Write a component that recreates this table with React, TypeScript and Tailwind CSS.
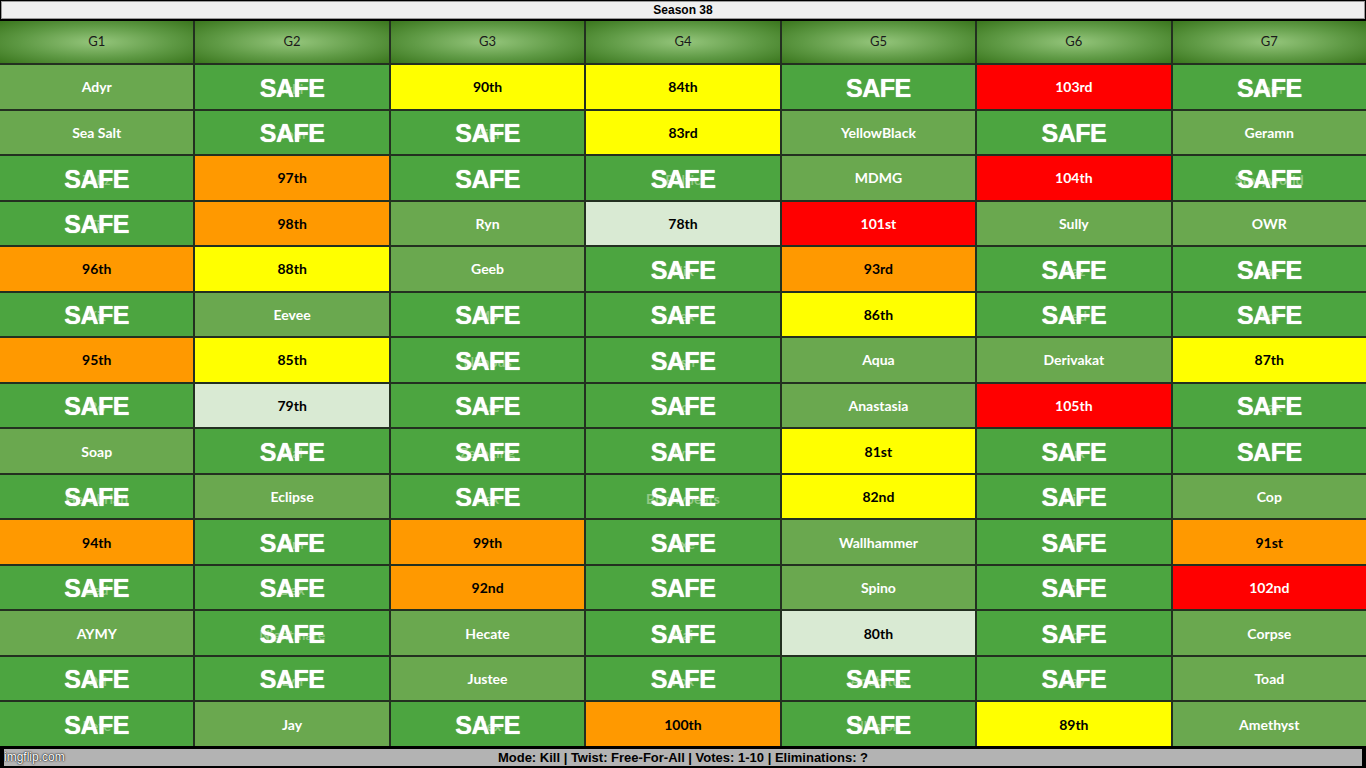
import React from 'react';

type Kind = 'name' | 'safe' | 'yellow' | 'orange' | 'red' | 'pale';
type Cell = { k: Kind; t: string; ghost?: string };

const n = (t: string): Cell => ({ k: 'name', t });
const s = (ghost = ''): Cell => ({ k: 'safe', t: 'SAFE', ghost });
const y = (t: string): Cell => ({ k: 'yellow', t });
const o = (t: string): Cell => ({ k: 'orange', t });
const r = (t: string): Cell => ({ k: 'red', t });
const p = (t: string): Cell => ({ k: 'pale', t });

const rows: Cell[][] = [
  [n('Adyr'), s('Ikki'), y('90th'), y('84th'), s(), r('103rd'), s('Sam')],
  [n('Sea Salt'), s('Tom'), s('Kiki'), y('83rd'), n('YellowBlack'), s(), n('Geramn')],
  [s('Tekz'), o('97th'), s(), s('Baltic'), n('MDMG'), r('104th'), s('Storyworld')],
  [s('Tit'), o('98th'), n('Ryn'), p('78th'), r('101st'), n('Sully'), n('OWR')],
  [o('96th'), y('88th'), n('Geeb'), s('Nix'), o('93rd'), s('Kaz'), s('Jaz')],
  [s('Kit'), n('Eevee'), s('Mo'), s('Vex'), y('86th'), s('Ned'), s('Sol')],
  [o('95th'), y('85th'), s('Nimbus'), s('Ash'), n('Aqua'), n('Derivakat'), y('87th')],
  [s('Bo'), p('79th'), s('Rue'), s('Io'), n('Anastasia'), r('105th'), s('Oak')],
  [n('Soap'), s('Hal'), s('Zeroking'), s('Ivy'), y('81st'), s('Lux'), s()],
  [s('Herobrian'), n('Eclipse'), s('Rex'), s('Bunnybeats'), y('82nd'), s('Pip'), n('Cop')],
  [o('94th'), s('Elm'), o('99th'), s('Axe'), n('Wallhammer'), s('Fig'), o('91st')],
  [s('Zed'), s('Dex'), o('92nd'), s(), n('Spino'), s('Gil'), r('102nd')],
  [n('AYMY'), s('Nightmare'), n('Hecate'), s('Kai'), p('80th'), s('Ace'), n('Corpse')],
  [s('Ori'), s('Lyn'), n('Justee'), s('Fox'), s('Anubitus'), s('Ray'), n('Toad')],
  [s('Pete'), n('Jay'), s('Mex'), o('100th'), s('Illusion'), y('89th'), n('Amethyst')],
];

const kindClass: Record<Kind, string> = {
  name: 'bg-[#6aa84f] text-white',
  safe: 'bg-[#4ca540] text-white',
  yellow: 'bg-[#ffff00] text-black',
  orange: 'bg-[#ff9900] text-black',
  red: 'bg-[#ff0000] text-white',
  pale: 'bg-[#d9ead3] text-black',
};

const GridCell = ({ c }: { c: Cell }) => {
  if (c.k === 'safe') {
    return (
      <div className={`relative flex items-center justify-center overflow-hidden ${kindClass.safe}`}>
        {c.ghost && (
          <span className="absolute inset-0 flex items-center justify-center pt-[3px] font-['Lato',sans-serif] text-[14px] font-bold text-[#93c985]">
            {c.ghost}
          </span>
        )}
        <span className="relative pt-[3px] font-['Liberation_Sans',Arial,sans-serif] text-[25px] font-bold tracking-[-0.5px] [text-shadow:0_0_1px_#fff]">
          SAFE
        </span>
      </div>
    );
  }
  return (
    <div className={`flex items-center justify-center font-['Lato',sans-serif] text-[14px] font-bold ${kindClass[c.k]}`}>
      {c.t}
    </div>
  );
};

export default function App() {
  const heads = ['G1', 'G2', 'G3', 'G4', 'G5', 'G6', 'G7'];
  return (
    <div className="relative flex h-[768px] w-[1366px] flex-col overflow-hidden bg-black">
      <div className="mx-[1px] mt-[1px] flex h-[18px] items-center justify-center border border-[#9a9a9a] bg-[#efefef] font-['Liberation_Sans',Arial,sans-serif] text-[12px] font-bold text-black">
        Season 38
      </div>
      <div className="mt-[2px] grid flex-1 grid-cols-7 grid-rows-[42px_repeat(15,minmax(0,1fr))] gap-[2px] bg-[#233020]">
        {heads.map((h) => (
          <div
            key={h}
            className="flex items-center justify-center bg-[radial-gradient(ellipse_at_center,#95c67c_0%,#5f9a45_55%,#3a761d_100%)] font-['Lato',sans-serif] text-[13px] text-[#1a1a1a]"
          >
            {h}
          </div>
        ))}
        {rows.map((row, i) => row.map((c, j) => <GridCell key={`${i}-${j}`} c={c} />))}
      </div>
      <div className="mx-[3px] mb-[1px] mt-[2px] flex h-[19px] items-center justify-center border border-black bg-[#b3b3b3] font-['Liberation_Sans',Arial,sans-serif] text-[13px] font-bold text-black">
        Mode: Kill | Twist: Free-For-All | Votes: 1-10 | Eliminations: ?
      </div>
      <span className="absolute bottom-[2px] left-[4px] font-['Liberation_Sans',Arial,sans-serif] text-[12px] text-white [text-shadow:0_0_2px_#000,0_0_1px_#000]">
        imgflip.com
      </span>
    </div>
  );
}
